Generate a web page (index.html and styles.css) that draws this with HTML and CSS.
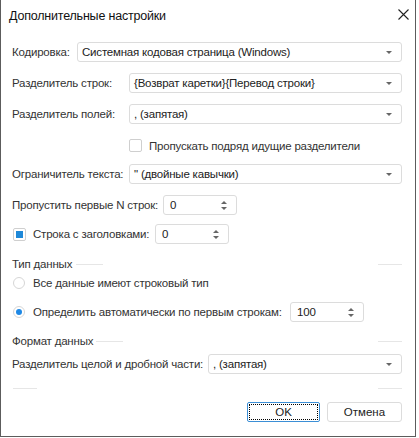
FILE: index.html
```html
<!DOCTYPE html>
<html lang="ru">
<head>
  <meta charset="UTF-8" />
  <meta name="viewport" content="width=device-width, initial-scale=1.0">
  <title>Дополнительные настройки</title>
  <link rel="stylesheet" href="styles.css">
</head>
<body>
  <div class="dialog">
    <div class="titlebar">
      <span class="title">Дополнительные настройки</span>
      <svg class="close" width="11" height="11" viewBox="0 0 11 11">
        <path d="M0.5 0.5 L10.5 10.5 M10.5 0.5 L0.5 10.5" stroke="#222" stroke-width="1.1" fill="none"/>
      </svg>
    </div>

    <div class="content">
      <div class="row r-enc">
        <label class="lbl w-enc">Кодировка:</label>
        <div class="select">Системная кодовая страница (Windows)<span class="arrow"></span></div>
      </div>

      <div class="row r-std">
        <label class="lbl w-std">Разделитель строк:</label>
        <div class="select">{Возврат каретки}{Перевод строки}<span class="arrow"></span></div>
      </div>

      <div class="row r-std">
        <label class="lbl w-std">Разделитель полей:</label>
        <div class="select">, (запятая)<span class="arrow"></span></div>
      </div>

      <div class="row r-check">
        <span class="checkbox"></span>
        <span class="check-text">Пропускать подряд идущие разделители</span>
      </div>

      <div class="row r-quote">
        <label class="lbl w-std">Ограничитель текста:</label>
        <div class="select">" (двойные кавычки)<span class="arrow"></span></div>
      </div>

      <div class="row r-skip">
        <label class="lbl w-skip">Пропустить первые N строк:</label>
        <div class="spin">0<span class="spin-btn"><i class="up"></i><i class="down"></i></span></div>
      </div>

      <div class="row r-head">
        <span class="checkbox checked"></span>
        <label class="lbl w-head">Строка с заголовками:</label>
        <div class="spin">0<span class="spin-btn"><i class="up"></i><i class="down"></i></span></div>
      </div>

      <div class="group g-type">Тип данных</div>

      <div class="row r-radio1">
        <span class="radio"></span>
        <span class="radio-text">Все данные имеют строковый тип</span>
      </div>

      <div class="row r-radio2">
        <span class="radio on"></span>
        <label class="lbl w-auto">Определить автоматически по первым строкам:</label>
        <div class="spin">100<span class="spin-btn"><i class="up"></i><i class="down"></i></span></div>
      </div>

      <div class="group g-format">Формат данных</div>

      <div class="row r-dec">
        <label class="lbl w-dec">Разделитель целой и дробной части:</label>
        <div class="select">, (запятая)<span class="arrow"></span></div>
      </div>

      <div class="separator"></div>

      <div class="buttons">
        <button class="btn ok"><span class="focus">OK</span></button>
        <button class="btn">Отмена</button>
      </div>
    </div>
  </div>
</body>
</html>
```

FILE: styles.css
```css
body {
  margin: 0;
  font-family: "Liberation Sans", Arial, sans-serif;
  font-size: 11.5px;
  letter-spacing: -0.2px;
  color: #333;
  background: #fff;
}
.dialog {
  width: 416px;
  height: 437px;
  box-sizing: border-box;
  border: 1px solid #5c5c5c;
  border-top: none;
  background: #fff;
}
.titlebar {
  height: 34px;
  display: flex;
  align-items: center;
  justify-content: space-between;
  padding: 0 6px 2px 8px;
  box-sizing: border-box;
}
.title {
  font-size: 12.5px;
  color: #111;
}
.close {
  margin-top: -3px;
}
.content {
  padding: 0 13px 0 11px;
}
.row {
  display: flex;
  align-items: center;
  height: 20px;
}
.r-enc { margin-top: 8px; }
.r-std { margin-top: 11px; }
.r-check { margin-top: 15px; height: 13px; padding-left: 117px; }
.r-quote { margin-top: 12px; }
.r-skip { margin-top: 11px; }
.r-head { margin-top: 9px; }
.r-radio1 { margin-top: 6px; height: 12px; }
.r-radio2 { margin-top: 13px; }
.r-dec { margin-top: 6px; }

.lbl {
  white-space: nowrap;
  flex: none;
}
.w-enc { width: 65px; }
.w-std { width: 117px; }
.w-skip { width: 151px; }
.w-head { width: 122px; }
.w-auto { width: 257px; }
.w-dec { width: 196px; }

.select {
  flex: 1;
  height: 20px;
  box-sizing: border-box;
  border: 1px solid #dcdcdc;
  border-radius: 3px;
  padding-left: 4px;
  display: flex;
  align-items: center;
  position: relative;
  color: #222;
  white-space: nowrap;
}
.arrow {
  position: absolute;
  right: 9px;
  top: 8px;
  width: 0;
  height: 0;
  border-left: 3px solid transparent;
  border-right: 3px solid transparent;
  border-top: 3px solid #666;
}

.spin {
  width: 74px;
  height: 20px;
  box-sizing: border-box;
  border: 1px solid #dcdcdc;
  border-radius: 3px;
  padding-left: 6px;
  display: flex;
  align-items: center;
  position: relative;
  color: #222;
}
.spin-btn i {
  position: absolute;
  right: 9px;
  width: 0;
  height: 0;
  border-left: 3px solid transparent;
  border-right: 3px solid transparent;
}
.spin-btn .up { top: 5px; border-bottom: 3px solid #666; }
.spin-btn .down { top: 11px; border-top: 3px solid #666; }

.checkbox {
  width: 13px;
  height: 13px;
  box-sizing: border-box;
  border: 1px solid #cfcfcf;
  border-radius: 2px;
  flex: none;
  margin-right: 7px;
  position: relative;
}
.checkbox.checked::after {
  content: "";
  position: absolute;
  left: 2px;
  top: 2px;
  width: 7px;
  height: 7px;
  background: #1e88d8;
}
.r-head .checkbox { margin-left: 1px; margin-right: 7px; }

.radio {
  width: 12px;
  height: 12px;
  box-sizing: border-box;
  border: 1px solid #d6d6d6;
  border-radius: 50%;
  flex: none;
  margin-left: 1px;
  margin-right: 8px;
  position: relative;
}
.radio.on::after {
  content: "";
  position: absolute;
  left: 2px;
  top: 2px;
  width: 6px;
  height: 6px;
  border-radius: 50%;
  background: #1e88e5;
}

/* group caption with its thin rule drawn as a background strip */
.group {
  height: 14px;
  line-height: 14px;
  color: #333;
  background-repeat: no-repeat;
  background-size: 100% 1px;
  background-position: 0 7px;
}
.g-type {
  margin-top: 13px;
  background-image: linear-gradient(to right, transparent 64px, #e6e6e6 64px, #e6e6e6 91px, transparent 91px, transparent calc(100% - 24px), #e6e6e6 calc(100% - 24px));
}
.g-format {
  margin-top: 12px;
  background-image: linear-gradient(to right, transparent 84px, #e6e6e6 84px, #e6e6e6 111px, transparent 111px, transparent calc(100% - 24px), #e6e6e6 calc(100% - 24px));
}
.separator {
  margin-top: 14px;
  height: 1px;
  margin-left: 1px;
  background: linear-gradient(to right, #e6e6e6 0, #e6e6e6 24px, transparent 24px, transparent calc(100% - 24px), #e6e6e6 calc(100% - 24px));
}

.buttons {
  margin-top: 13px;
  display: flex;
  justify-content: flex-end;
  gap: 7px;
}
.btn {
  font: inherit;
  color: #222;
  background: #fff;
  height: 20px;
  box-sizing: border-box;
  border: 1px solid #dcdcdc;
  border-radius: 3px;
  width: 75px;
  padding: 0;
}
.btn.ok {
  width: 73px;
  border-color: #3b8fd6;
  border-radius: 2px;
  padding: 1px;
}
.focus {
  display: flex;
  align-items: center;
  justify-content: center;
  height: 100%;
  border: 1px dotted #000;
  box-sizing: border-box;
}
```
